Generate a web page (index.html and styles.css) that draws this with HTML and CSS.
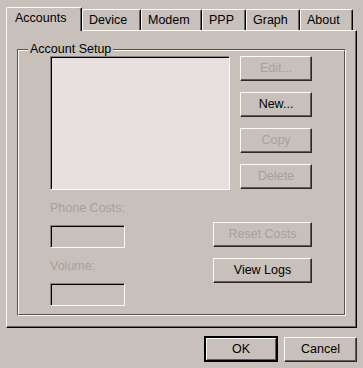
FILE: index.html
```html
<!DOCTYPE html>
<html lang="en">
<head>
    <meta charset="UTF-8">
    <title>Accounts</title>
    <link rel="stylesheet" href="styles.css">
</head>
<body>
    <div class="dialog">
        <div class="tabs">
            <div class="tab tab-accounts active">Accounts</div>
            <div class="tab tab-device">Device</div>
            <div class="tab tab-modem">Modem</div>
            <div class="tab tab-ppp">PPP</div>
            <div class="tab tab-graph">Graph</div>
            <div class="tab tab-about">About</div>
        </div>

        <div class="panel">
            <div class="group">
                <span class="group-title">Account Setup</span>
                <div class="group-inner">
                    <div class="group-top">
                        <div class="listbox"></div>
                        <div class="btn-col">
                            <button class="btn" disabled>Edit...</button>
                            <button class="btn">New...</button>
                            <button class="btn" disabled>Copy</button>
                            <button class="btn" disabled>Delete</button>
                        </div>
                    </div>
                    <div class="group-bottom">
                        <div class="field-col">
                            <div class="field-label">Phone Costs:</div>
                            <div class="field"></div>
                            <div class="field-label">Volume:</div>
                            <div class="field"></div>
                        </div>
                        <div class="btn-col btn-col-wide">
                            <button class="btn btn-wide" disabled>Reset Costs</button>
                            <button class="btn btn-wide">View Logs</button>
                        </div>
                    </div>
                </div>
            </div>
        </div>

        <div class="footer">
            <button class="btn btn-footer btn-default">OK</button>
            <button class="btn btn-footer">Cancel</button>
        </div>
    </div>
</body>
</html>
```

FILE: styles.css
```css
* {
    margin: 0;
    padding: 0;
    box-sizing: border-box;
}

body {
    font-family: "Liberation Sans", Arial, sans-serif;
    font-size: 12.5px;
    background: #c8c0ba;
    color: #000;
}

.dialog {
    width: 363px;
    height: 368px;
    padding: 7px 0 0 6px;
}

/* Tabs */
.tabs {
    display: flex;
    align-items: flex-end;
    height: 23px;
}

.tab {
    position: relative;
    height: 21px;
    line-height: 20px;
    padding-left: 6px;
    white-space: nowrap;
    border-top: 1px solid #fcf8f2;
    border-left: 1px solid #fcf8f2;
    border-right: 1px solid #000;
    border-top-left-radius: 2px;
    border-top-right-radius: 2px;
    box-shadow: inset -1px 0 0 #6c6464;
    background: #c8c0ba;
}

.tab.active {
    height: 24px;
    margin-bottom: -1px;
    line-height: 21px;
    padding-left: 8px;
    z-index: 1;
}

.tab-accounts { width: 76px; }
.tab-device { width: 59px; }
.tab-modem { width: 61px; }
.tab-ppp { width: 44px; }
.tab-graph { width: 54px; }
.tab-about { width: 53px; }

/* Panel */
.panel {
    width: 351px;
    height: 298px;
    padding: 18px 0 0 10px;
    border-top: 1px solid #fcf8f2;
    border-left: 1px solid #fcf8f2;
    border-right: 1px solid #000;
    border-bottom: 1px solid #000;
    box-shadow: inset -1px -1px 0 #6c6464;
}

/* Group box */
.group {
    position: relative;
    width: 329px;
    height: 267px;
    border-top: 1px solid #5a5252;
    border-left: 1px solid #5a5252;
    border-right: 1px solid #fcf8f2;
    border-bottom: 1px solid #fcf8f2;
}

.group-title {
    position: absolute;
    top: -8px;
    left: 10px;
    padding: 0 2px;
    line-height: 14px;
    background: #c8c0ba;
}

.group-inner {
    height: 100%;
    padding: 5px 0 0 31px;
    border-top: 1px solid #fcf8f2;
    border-left: 1px solid #fcf8f2;
    border-right: 1px solid #5a5252;
    border-bottom: 1px solid #5a5252;
}

.group-top {
    display: flex;
    gap: 10px;
}

.listbox {
    width: 180px;
    height: 134px;
    background: #e8e0e0;
    border-top: 1px solid #8a8280;
    border-left: 1px solid #8a8280;
    border-right: 1px solid #fcf8f2;
    border-bottom: 1px solid #fcf8f2;
    box-shadow: inset 1px 1px 0 #000;
}

.btn-col {
    display: flex;
    flex-direction: column;
    gap: 11px;
}

.group-bottom {
    display: flex;
    justify-content: space-between;
    width: 262px;
}

.field-col {
    display: flex;
    flex-direction: column;
    padding-top: 11px;
}

.field-label {
    line-height: 14px;
    color: #a8a09a;
    margin-bottom: 10px;
}

.field {
    width: 75px;
    height: 23px;
    margin-bottom: 11px;
    border-top: 1px solid #8a8280;
    border-left: 1px solid #8a8280;
    border-right: 1px solid #fcf8f2;
    border-bottom: 1px solid #fcf8f2;
    box-shadow: inset 1px 1px 0 #000;
}

.btn-col-wide {
    padding-top: 32px;
}

/* Buttons */
.btn {
    width: 72px;
    height: 25px;
    font: inherit;
    color: #000;
    background: #c8c0ba;
    border-top: 1px solid #fcf8f2;
    border-left: 1px solid #fcf8f2;
    border-right: 1px solid #302828;
    border-bottom: 1px solid #302828;
    box-shadow: inset -1px -1px 0 #625a5a;
    padding-bottom: 1px;
}

.btn:disabled {
    color: #a8a09a;
}

.btn-wide {
    width: 99px;
}

/* Footer */
.footer {
    display: flex;
    align-items: flex-end;
    justify-content: flex-end;
    gap: 6px;
    width: 351px;
    margin-top: 8px;
}

.btn-footer {
    width: 73px;
}

.btn-default {
    width: 74px;
    height: 26px;
    border: 2px solid #000;
    box-shadow: inset 1px 1px 0 #fcf8f2, inset -1px -1px 0 #625a5a;
}
```
